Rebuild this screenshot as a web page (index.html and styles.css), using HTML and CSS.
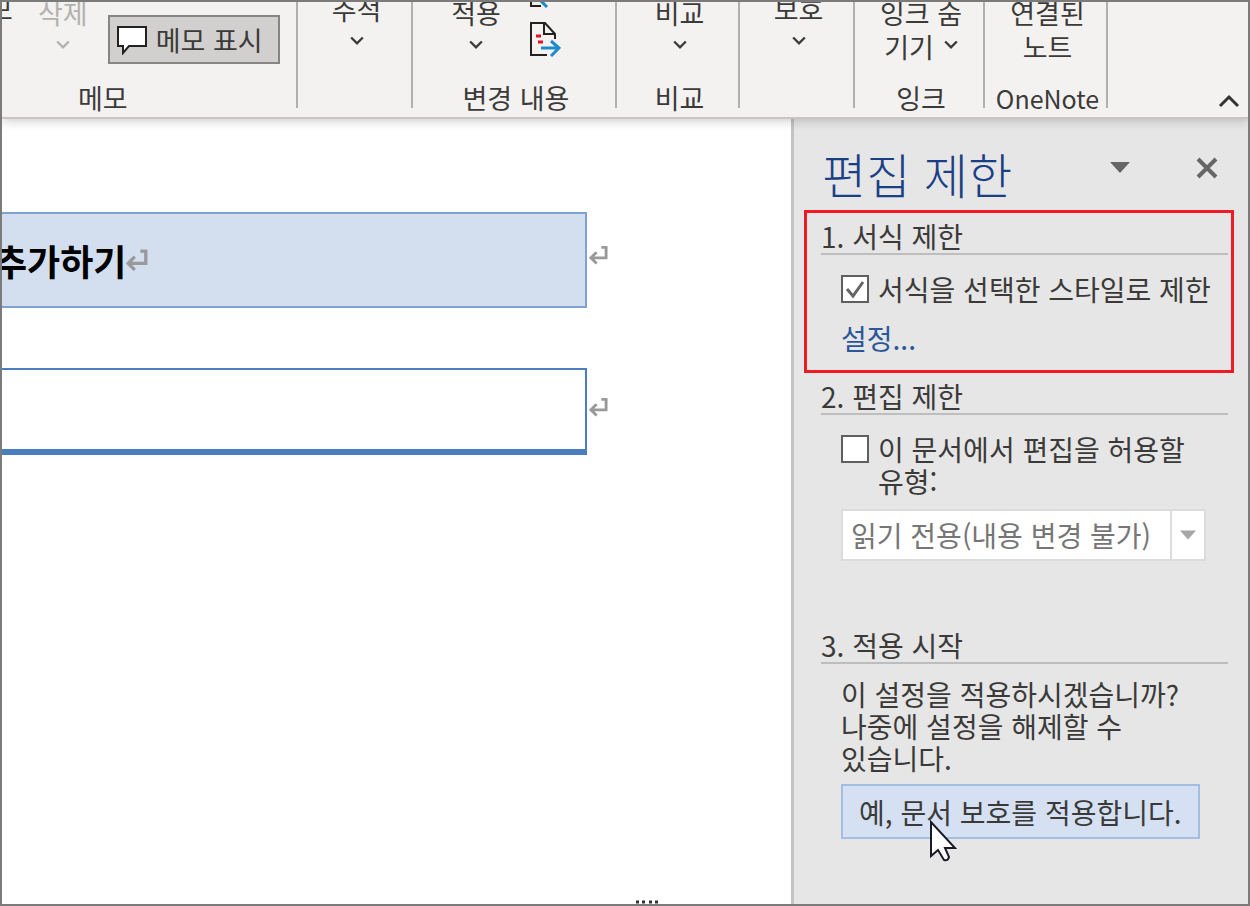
FILE: index.html
```html
<!DOCTYPE html>
<html lang="ko">
<head>
  <meta charset="utf-8">
  <title>편집 제한</title>
  <link rel="stylesheet" href="styles.css">
</head>
<body>
  <div class="window">
    <!-- Ribbon, scrolled so that only the lower half is visible -->
    <header class="ribbon">
      <div class="group group-memo">
        <div class="tools">
          <button class="tool tool-new">메모</button>
          <button class="tool" disabled>삭제
            <svg class="chevron" viewBox="0 0 12 8"><path d="M1 1l5 5 5-5"/></svg>
          </button>
          <button class="show-memo">
            <svg width="32" height="30" viewBox="0 0 32 30"><path d="M2 2h28v19H13l-6 7v-7H2z" fill="#fff" stroke="#222" stroke-width="2"/></svg>
            메모 표시
          </button>
        </div>
        <div class="group-name">메모</div>
      </div>
      <div class="group">
        <div class="tools raised">
          <button class="tool">추적
            <svg class="chevron" viewBox="0 0 12 8"><path d="M1 1l5 5 5-5"/></svg>
          </button>
        </div>
        <div class="group-name"></div>
      </div>
      <div class="group">
        <div class="tools tools-changes">
          <button class="tool">적용
            <svg class="chevron" viewBox="0 0 12 8"><path d="M1 1l5 5 5-5"/></svg>
          </button>
          <div class="steps">
            <button class="step" aria-label="이전">
              <svg width="32" height="36" viewBox="0 0 32 36">
                <path d="M2 2v32h10" fill="none" stroke="#222" stroke-width="2"/>
                <path d="M30 27H10M18 19l-8 8 8 8" fill="none" stroke="#1e8bcd" stroke-width="3"/>
              </svg>
            </button>
            <button class="step" aria-label="다음">
              <svg width="32" height="36" viewBox="0 0 32 36">
                <path d="M18 34H2V2h14l10 11v5M15 2v11h11" fill="none" stroke="#222" stroke-width="2"/>
                <path d="M7 15h5M9 21h5" stroke="#e81123" stroke-width="3"/>
                <path d="M12 27h17M22 20l8 7-8 8" fill="none" stroke="#1e8bcd" stroke-width="3"/>
              </svg>
            </button>
          </div>
        </div>
        <div class="group-name">변경 내용</div>
      </div>
      <div class="group">
        <div class="tools">
          <button class="tool">비교
            <svg class="chevron" viewBox="0 0 12 8"><path d="M1 1l5 5 5-5"/></svg>
          </button>
        </div>
        <div class="group-name">비교</div>
      </div>
      <div class="group">
        <div class="tools raised">
          <button class="tool">보호
            <svg class="chevron" viewBox="0 0 12 8"><path d="M1 1l5 5 5-5"/></svg>
          </button>
        </div>
        <div class="group-name"></div>
      </div>
      <div class="group">
        <div class="tools">
          <button class="tool">잉크 숨
            <span>기기 <svg class="chevron" viewBox="0 0 12 8"><path d="M1 1l5 5 5-5"/></svg></span>
          </button>
        </div>
        <div class="group-name">잉크</div>
      </div>
      <div class="group">
        <div class="tools">
          <button class="tool">연결된<span>노트</span></button>
        </div>
        <div class="group-name latin">OneNote</div>
      </div>
      <button class="collapse" aria-label="리본 메뉴 축소">
        <svg width="22" height="14" viewBox="0 0 22 14"><path d="M2 12l9-9 9 9" fill="none" stroke="#333" stroke-width="3"/></svg>
      </button>
    </header>

    <div class="workspace">
      <main class="document">
        <div class="row">
          <div class="cell cell-title">
            <h1>추가하기</h1>
            <svg class="mark-big" viewBox="0 0 20 20"><path d="M13 2h5v11H3M8 7l-6 6 6 6"/></svg>
          </div>
          <svg class="mark" viewBox="0 0 20 20"><path d="M13 2h5v11H3M8 7l-6 6 6 6"/></svg>
        </div>
        <div class="row">
          <div class="cell cell-empty"></div>
          <svg class="mark" viewBox="0 0 20 20"><path d="M13 2h5v11H3M8 7l-6 6 6 6"/></svg>
        </div>
        <!-- tops of the next line, cut off by the window edge -->
        <svg class="next-line" viewBox="0 0 24 4"><path d="M1 2h3M7 2h3M14 2h3M20 2h3"/></svg>
      </main>

      <aside class="panel">
        <div class="panel-head">
          <h2>편집 제한</h2>
          <button class="panel-button" aria-label="작업창 옵션">
            <svg width="20" height="12" viewBox="0 0 20 12"><path d="M0 0h20L10 11z" fill="#666"/></svg>
          </button>
          <button class="panel-button" aria-label="닫기">
            <svg width="22" height="22" viewBox="0 0 22 22"><path d="M2 2l18 18M20 2L2 20" stroke="#666" stroke-width="4"/></svg>
          </button>
        </div>

        <section class="step-box highlight">
          <h3>1. 서식 제한</h3>
          <div class="check">
            <input type="checkbox" id="limit-format" checked>
            <label for="limit-format">서식을 선택한 스타일로 제한</label>
          </div>
          <a class="settings" href="#">설정...</a>
        </section>

        <section class="step-box">
          <h3>2. 편집 제한</h3>
          <div class="check">
            <input type="checkbox" id="limit-edit">
            <label for="limit-edit">이 문서에서 편집을 허용할 유형:</label>
          </div>
          <div class="select">
            <select aria-label="편집 유형" disabled>
              <option>읽기 전용(내용 변경 불가)</option>
            </select>
            <svg class="select-arrow" viewBox="0 0 16 9"><path d="M0 0h16L8 9z"/></svg>
          </div>
        </section>

        <section class="step-box start">
          <h3>3. 적용 시작</h3>
          <p>이 설정을 적용하시겠습니까? 나중에 설정을 해제할 수 있습니다.</p>
          <button class="apply">예, 문서 보호를 적용합니다.
            <svg class="cursor" viewBox="0 0 28 42"><path d="M2 2v34l7-6 6 10q4 1 5-3l-4-9h10z"/></svg>
          </button>
        </section>
      </aside>
    </div>
  </div>
</body>
</html>
```
FILE: styles.css
```css
* {
  box-sizing: border-box;
}

body {
  margin: 0;
  font-family: "Noto Sans CJK KR", "Open Sans", sans-serif;
  font-size: 27px;
  line-height: 32px;
  color: #3b3a39;
}

button {
  padding: 0;
  border: 0;
  background: none;
  font: inherit;
  color: inherit;
}

svg {
  display: block;
}

h1, h2, h3, p {
  margin: 0;
}

.window {
  display: flex;
  flex-direction: column;
  height: 100vh;
  overflow: hidden;
  border: 2px solid #7b7b7b;
  background: #fff;
}

/* Ribbon */
.ribbon {
  position: relative;
  display: grid;
  grid-template-columns: 296px 115px 204px 123px 115px 130px 123px 1fr;
  flex: none;
  height: 117px;
  padding-bottom: 9px;
  overflow: hidden;
  border-bottom: 2px solid #c8c6c4;
  background: #f3f2f1;
  box-shadow: 0 2px 10px rgba(0, 0, 0, 0.2);
}

.group {
  display: flex;
  flex-direction: column;
  justify-content: flex-end;
  align-items: center;
  height: 106px;
  padding-left: 4px;
  border-right: 2px solid #b1b0af;
  line-height: 34px;
  white-space: nowrap;
}

.group-memo {
  align-items: flex-start;
  padding-left: 0;
}

.tools {
  display: flex;
  flex: none;
  align-items: flex-end;
  padding-bottom: 24px;
}

.raised {
  padding-bottom: 28px;
}

.tool {
  display: flex;
  flex-direction: column;
  align-items: center;
}

.tool span {
  display: flex;
  align-items: center;
  gap: 10px;
}

.tool:disabled {
  color: #b3b1af;
}

.tool-new {
  width: 40px;
  margin-left: -34px;
  padding-bottom: 38px;
}

.group-memo .tool:disabled {
  margin-left: 30px;
}

.chevron {
  width: 14px;
  height: 34px;
  padding-bottom: 4px;
  fill: none;
  stroke: currentColor;
  stroke-width: 2;
}

.show-memo {
  display: flex;
  align-items: center;
  gap: 8px;
  height: 49px;
  margin-left: 20px;
  padding: 0 15px 0 6px;
  border: 2px solid #868584;
  background: #d2d0ce;
}

.group-name {
  flex: none;
  height: 20px;
  line-height: 20px;
}

.group-memo .group-name {
  margin-left: 76px;
}

.latin {
  font-size: 25px;
}

.tools-changes {
  gap: 28px;
  padding-right: 20px;
}

.steps {
  display: flex;
  flex-direction: column;
  gap: 13px;
  padding-bottom: 7px;
}

.collapse {
  align-self: end;
  justify-self: end;
  margin-right: 8px;
}

/* Document */
.workspace {
  display: flex;
  flex: 1;
  min-height: 0;
}

.document {
  position: relative;
  display: flex;
  flex: 1;
  flex-direction: column;
  gap: 60px;
  padding: 93px 183px 0 0;
}

.row {
  display: flex;
  align-items: center;
  gap: 2px;
}

.cell {
  display: flex;
  flex: 1;
  align-items: center;
}

.cell-title {
  height: 96px;
  border: 2px solid #7fa3d1;
  border-left: 0;
  background: #d3dfee;
}

.cell-title h1 {
  margin-left: -8px;
  font-size: 36px;
  line-height: 48px;
  color: #000;
}

.cell-empty {
  height: 87px;
  border: 2px solid #4a7fbf;
  border-width: 2px 2px 6px 0;
}

.mark,
.mark-big {
  fill: none;
  stroke: #999;
  stroke-width: 3;
}

.mark {
  width: 19px;
  height: 20px;
  margin-bottom: 10px;
}

.mark-big {
  width: 22px;
  height: 22px;
}

.next-line {
  position: absolute;
  right: 132px;
  bottom: 0;
  width: 24px;
  height: 4px;
  stroke: #333;
  stroke-width: 3;
}

/* Restrict editing panel */
.panel {
  flex: none;
  width: 457px;
  padding: 0 14px 0 10px;
  border-left: 3px solid #c3c3c3;
  background: #e6e6e6;
  font-size: 28px;
}

.panel-head {
  display: flex;
  align-items: center;
  height: 91px;
  padding: 16px 16px 0 18px;
}

.panel-head h2 {
  margin-right: auto;
  font-size: 48px;
  font-weight: 300;
  line-height: 64px;
  color: #1b3f86;
}

.panel-button {
  margin: 0 0 10px 66px;
}

.step-box {
  padding: 6px 6px 0 17px;
}

.step-box h3 {
  margin-bottom: 18px;
  border-bottom: 2px solid #bdbdbd;
  font-size: 28px;
  font-weight: 400;
  line-height: 34px;
}

.highlight {
  padding: 6px 3px 16px 14px;
  border: 3px solid #ed1c24;
}

.check {
  display: flex;
  align-items: flex-start;
  gap: 9px;
  margin-left: 20px;
  word-break: keep-all;
}

.check input {
  flex: none;
  appearance: none;
  width: 28px;
  height: 28px;
  margin: 2px 0 0;
  border: 2px solid #5f5f5f;
  background: #fff;
}

.check input:checked {
  background: #fff url("data:image/svg+xml,%3Csvg xmlns='http://www.w3.org/2000/svg' viewBox='0 0 24 24'%3E%3Cpath d='M4 12l6 7L20 5' fill='none' stroke='%23666' stroke-width='3'/%3E%3C/svg%3E");
}

.settings {
  display: block;
  margin: 17px 0 0 20px;
  color: #2b579a;
  text-decoration: none;
}

.select {
  position: relative;
  width: 365px;
  margin: 12px 0 0 20px;
}

.select select {
  appearance: none;
  width: 100%;
  height: 52px;
  padding: 0 8px;
  border: 2px solid #dcdcdc;
  border-radius: 0;
  background: #fff;
  font: inherit;
  color: #767676;
  opacity: 1;
}

.select-arrow {
  position: absolute;
  top: 2px;
  right: 2px;
  width: 34px;
  height: 48px;
  padding: 0 8px;
  border-left: 2px solid #dcdcdc;
  fill: #a6a6a6;
}

.start {
  margin-top: 61px;
}

.start h3 {
  margin-bottom: 14px;
}

.start p {
  margin: 0 0 10px 20px;
  padding-right: 20px;
  word-break: keep-all;
}

.apply {
  position: relative;
  height: 55px;
  margin-left: 20px;
  padding: 0 16px;
  border: 2px solid #a3bde3;
  background: #d5e1f2;
}

.cursor {
  position: absolute;
  top: 34px;
  left: 86px;
  width: 28px;
  height: 42px;
  fill: #fff;
  stroke: #1a1a26;
  stroke-width: 2;
}
```
